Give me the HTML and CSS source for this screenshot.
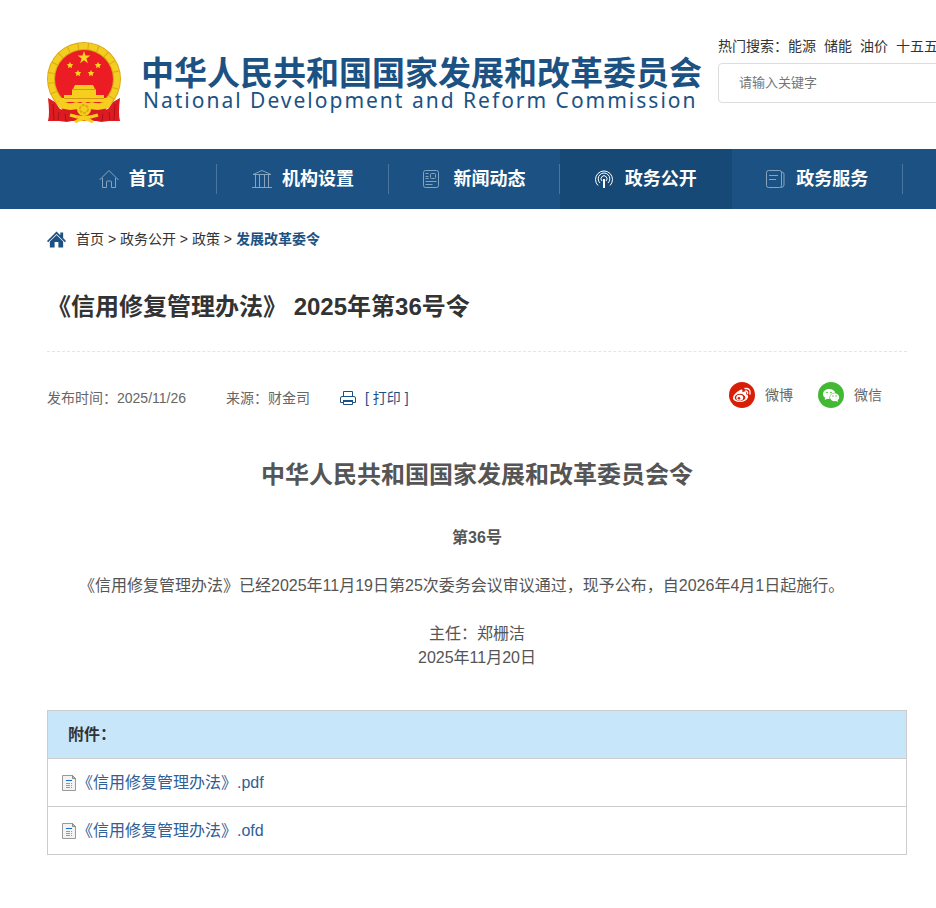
FILE: index.html
```html
<!DOCTYPE html>
<html lang="zh-CN">
<head>
<meta charset="utf-8">
<meta name="viewport" content="width=device-width, initial-scale=1">
<title>《信用修复管理办法》 2025年第36号令</title>
<link rel="stylesheet" href="styles.css">
</head>
<body>
<header class="header">
  <a class="brand" href="#">
    <svg class="emblem" viewBox="0 0 76 82" aria-hidden="true">
      <circle cx="38" cy="37" r="37" fill="#dba915"/>
      <circle cx="38" cy="37" r="33" fill="none" stroke="#f3cd1f" stroke-width="6" stroke-dasharray="9 1"/>
      <circle cx="38" cy="37" r="29" fill="#eb1c24"/>
      <path fill="#fcd71f" d="M38 9l1.500 4.600h4.900l-4 2.900 1.500 4.700-3.900-2.900-3.900 2.900 1.500-4.700-4-2.900h4.900z"/>
      <path fill="#fcd71f" d="M24 20l1 2 2.300.3-1.700 1.600.4 2.300-2-1.100-2 1.100.4-2.300-1.700-1.600 2.300-.3zM52 20l1 2 2.300.3-1.700 1.600.4 2.300-2-1.100-2 1.100.4-2.300-1.700-1.600 2.300-.3zM32 28l1 2 2.300.3-1.700 1.600.4 2.300-2-1.100-2 1.100.4-2.300-1.700-1.600 2.300-.3zM45 28l1 2 2.300.3-1.700 1.600.4 2.300-2-1.100-2 1.100.4-2.300-1.700-1.600 2.300-.3z"/>
      <path fill="#f6cf1e" d="M29 43h18l2 4H27zM26 47h24v6h8v3h5v4H13v-4h5v-3h8z"/>
      <path stroke="#d49b12" d="M26 47.500h24M18 56.500h40"/>
      <path fill="#df1b22" d="M2 56l7 4 5 7 12 3 4 8-9 2-8-1H2q2-7 0-23zM74 56l-7 4-5 7-12 3-4 8 9 2 8-1h11q-2-7 0-23z"/>
      <path fill="#d91b20" d="M14 63q12 3 24 1 12 2 24-1l-8 16H22z"/>
      <path fill="#f6cf1e" d="M10 59q13 4 20 1l8 2 8-2q7 3 20-1l-3 7-11 2-9-1q-5 5-10 0l-9 1-11-2z"/>
      <circle cx="38" cy="67" r="7" fill="#f6cf1e"/>
      <circle cx="38" cy="67" r="4" fill="none" stroke="#e2a713" stroke-width="2" stroke-dasharray="3 1"/>
      <path fill="none" stroke="#a61318" d="M7 62l1 16M13 70l-1 8M19 72l1 7M69 62l-1 16M63 70l1 8M57 72l-1 7"/>
      <path fill="none" stroke="#f6cf1e" stroke-width="3" d="M24 73q14 5 28 0M29 80q9-6 18 0"/>
    </svg>
    <span class="brand-text">
      <strong class="brand-cn">中华人民共和国国家发展和改革委员会</strong>
      <span class="brand-en">National Development and Reform Commission</span>
    </span>
  </a>
  <div class="search">
    <div class="hot"><label for="keyword">热门搜索：</label><a href="#">能源</a><a href="#">储能</a><a href="#">油价</a><a href="#">十五五</a></div>
    <input class="search-box" id="keyword" type="text" placeholder="请输入关键字">
  </div>
</header>

<nav class="nav">
  <a class="nav-item" href="#">
    <svg viewBox="0 0 20 20" aria-hidden="true"><path d="M.5 11L10 1.500 19.500 11M3.500 9v9.500h4V13q0-1 1-1h3q1 0 1 1v5.500h4V9"/></svg>首页</a>
  <a class="nav-item" href="#">
    <svg viewBox="0 0 20 20" aria-hidden="true"><path d="M1 5.500L10 1.500l9 4zM0 18.500h20M3.500 6v12M7.500 6v12M12.500 6v12M16.500 6v12"/></svg>机构设置</a>
  <a class="nav-item" href="#">
    <svg viewBox="0 0 20 20" aria-hidden="true"><rect x=".5" y="1.500" width="15" height="17" rx="2"/><rect x="7.500" y="4.500" width="5" height="5" rx="1"/><path d="M2.500 4.500h3M2.500 7.500h3M2.500 9.500h3M2.500 12.500h11M2.500 15.500h7"/></svg>新闻动态</a>
  <a class="nav-item active" href="#">
    <svg viewBox="0 0 20 20" aria-hidden="true"><path d="M3 16.500a8.500 8.500 0 1 1 12 0M5 14a5.800 5.800 0 1 1 8 0M7 12a3 3 0 1 1 4 0"/><path class="mast" d="M9 10v9"/></svg>政务公开</a>
  <a class="nav-item" href="#">
    <svg viewBox="0 0 20 20" aria-hidden="true"><rect x=".5" y="1.500" width="15" height="17" rx="2"/><path d="M3 6.500h9M3 10.500h7M15 3q3 0 3 2v11q0 2-3 2.500"/></svg>政务服务</a>
</nav>

<main class="page">
  <div class="crumbs">
    <svg viewBox="0 0 20 17" aria-hidden="true"><path d="M10 0l4 4V1h3v6l3 3-1.200 1.300L10 2.700 1.200 11.300 0 10z"/><path d="M3 10.500l7-6.700 7 6.700V17h-5v-6H8v6H3z"/></svg>
    <span><a href="#">首页</a> &gt; <a href="#">政务公开</a> &gt; <a href="#">政策</a> &gt; <a class="current" href="#">发展改革委令</a></span>
  </div>
  <h1 class="title">《信用修复管理办法》 2025年第36号令</h1>
  <div class="meta">
    <span class="info">发布时间：2025/11/26</span>
    <span class="info source">来源：财金司</span>
    <button class="info print" type="button">
      <svg viewBox="0 0 16 14" aria-hidden="true"><path fill="none" stroke="currentColor" d="M3.500 5V.500h9V5M3 11.500H.500V7q0-1.500 1.500-1.500h12q1.500 0 1.500 1.500v4.500H13M3.500 9.500h9v4h-9z"/><path fill="currentColor" d="M3 9h10v2H3z"/></svg>[ 打印 ]</button>
    <div class="share">
      <a href="#"><svg viewBox="0 0 26 26" aria-hidden="true"><circle cx="13" cy="13" r="13" fill="#d81e06"/><path fill="#fff" d="M11 8q2-1 2.500.5l-.2 1.700q4-1.500 4 .8l-.4 1.300q3 .8 2 3.500-1.500 4-8 4.300-6 0-7-3.800-.2-4 7.100-8.300z"/><ellipse cx="11" cy="15.500" rx="5.300" ry="3.700" fill="#d81e06"/><ellipse cx="10.700" cy="15.700" rx="3.500" ry="3" fill="#fff"/><circle cx="10" cy="16.200" r="1.300" fill="#d81e06"/><path fill="none" stroke="#fff" stroke-width="1.400" stroke-linecap="round" d="M16 6.500q6-.5 5 5.500M16.500 9q2.500 0 2 2.500"/></svg>微博</a>
      <a href="#"><svg viewBox="0 0 26 26" aria-hidden="true"><circle cx="13" cy="13" r="13" fill="#43b933"/><path fill="#fff" d="M11 7c-3.400 0-6 2.200-6 5 0 1.600.8 2.900 2.200 3.800L6.700 18l2.400-1.300q1 .3 2.500.2c-.8-3.600 2.200-6.400 5.800-6.200C16.700 8.400 14 7 11 7z"/><path fill="#fff" d="M16.500 11.200c-2.500 0-4.500 1.700-4.500 4s2 4 4.500 4l1.600-.3 2 1-.5-1.700c1-.8 1.600-1.800 1.600-3 0-2.300-2.100-4-4.700-4z"/><g fill="#43b933"><circle cx="9" cy="10.500" r=".8"/><circle cx="13" cy="10.500" r=".8"/><circle cx="15" cy="14" r=".7"/><circle cx="18" cy="14" r=".7"/></g></svg>微信</a>
    </div>
  </div>

  <article class="article">
    <h2>中华人民共和国国家发展和改革委员会令</h2>
    <p class="number">第36号</p>
    <p class="body">《信用修复管理办法》已经2025年11月19日第25次委务会议审议通过，现予公布，自2026年4月1日起施行。</p>
    <p class="sign">主任：郑栅洁<br>2025年11月20日</p>
  </article>

  <table class="files">
    <thead><tr><th scope="col">附件：</th></tr></thead>
    <tbody>
      <tr><td><a href="#"><svg viewBox="0 0 16 16" aria-hidden="true"><path fill="#f3f3f3" stroke="#999" d="M1.500.500h10l3 3v12h-13z"/><path fill="#ccc" stroke="#888" d="M11.500.500v3h3z"/><path stroke="#1769c5" d="M5 5.500h6"/><path stroke="#999" d="M5 8.500h4M5 10.500h4M5 12.500h4M10 8.500h1M10 10.500h1M10 12.500h1"/></svg>《信用修复管理办法》.pdf</a></td></tr>
      <tr><td><a href="#"><svg viewBox="0 0 16 16" aria-hidden="true"><path fill="#f3f3f3" stroke="#999" d="M1.500.500h10l3 3v12h-13z"/><path fill="#ccc" stroke="#888" d="M11.500.500v3h3z"/><path stroke="#1769c5" d="M5 5.500h6"/><path stroke="#999" d="M5 8.500h4M5 10.500h4M5 12.500h4M10 8.500h1M10 10.500h1M10 12.500h1"/></svg>《信用修复管理办法》.ofd</a></td></tr>
    </tbody>
  </table>
</main>
</body>
</html>
```
FILE: styles.css
```css
* { box-sizing: border-box; }

body {
  margin: 0;
  background: #fff;
  color: #333;
  font: 14px/24px "Liberation Sans", "Noto Sans CJK SC", sans-serif;
}

a { color: inherit; text-decoration: none; }
svg { display: block; flex: none; }

.header {
  display: flex;
  gap: 16px;
  padding: 34px 0 25px 46px;
  overflow: hidden;
}

.brand {
  display: flex;
  flex: none;
  gap: 19px;
  padding-top: 8px;
  color: #1c5283;
}
.emblem { width: 76px; height: 82px; }
.brand-text { display: flex; flex-direction: column; padding-top: 14px; }
.brand-cn { font-size: 33px; line-height: 36px; white-space: nowrap; }
.brand-en {
  margin-top: -4px;
  padding-left: 2px;
  font: 21px/24px "Noto Sans", sans-serif;
  letter-spacing: 2px;
  white-space: nowrap;
}

.search { flex: none; width: 300px; }
.hot { display: flex; white-space: nowrap; }
.hot a { margin-right: 8px; }
.search-box {
  display: block;
  width: 100%;
  height: 40px;
  margin-top: 5px;
  padding: 0 20px 2px;
  border: 1px solid #ddd;
  border-radius: 4px;
  font: 13px "Liberation Sans", "Noto Sans CJK SC", sans-serif;
}
.search-box::placeholder { color: #757575; opacity: 1; }

.nav {
  display: grid;
  grid-template-columns: repeat(5, 20%);
  padding: 0 33px 0 46px;
  background: #1c5283;
}
.nav-item {
  position: relative;
  display: flex;
  align-items: center;
  justify-content: center;
  gap: 10px;
  height: 60px;
  color: #fff;
  font-size: 18px;
  font-weight: bold;
}
.nav-item::after {
  content: "";
  position: absolute;
  top: 15px;
  right: 0;
  width: 1px;
  height: 30px;
  background: #4a769d;
}
.nav-item.active { background: #174976; }
.nav-item.active::after { content: none; }
.nav-item svg {
  width: 20px;
  height: 20px;
  fill: none;
  stroke: #86a4be;
}
.nav-item.active svg { stroke: #fff; }
.mast { stroke-width: 2; }

.page { padding: 18px 29px 53px 47px; }

.crumbs { display: flex; align-items: center; gap: 10px; }
.crumbs svg { width: 19px; height: 17px; fill: #1c5283; }
.current { color: #1c5283; font-weight: bold; }

.title {
  margin: 38px 0 0;
  padding-bottom: 26px;
  border-bottom: 1px dashed #e5e5e5;
  font-size: 24px;
  line-height: 36px;
}

.meta {
  display: flex;
  align-items: flex-start;
  padding: 30px 25px 0 0;
  color: #666;
}
.info { padding: 4px 0 0; }
.source { margin-left: 40px; }
.print {
  display: flex;
  align-items: center;
  gap: 9px;
  margin-left: 30px;
  border: 0;
  background: none;
  color: #1c5283;
  font: inherit;
}
.print svg { width: 16px; height: 14px; }
.share { display: flex; gap: 25px; margin-left: auto; }
.share a { display: flex; align-items: center; gap: 10px; }
.share svg { width: 26px; height: 26px; }

.article {
  padding-top: 47px;
  color: #555;
  font-size: 16px;
  text-align: center;
}
.article h2 { margin: 0; font-size: 24px; line-height: 36px; }
.article p { margin: 24px 0 0; }
.article .number { margin-top: 33px; font-weight: bold; }
.article .body { text-align: left; text-indent: 32px; }

.files {
  width: 100%;
  margin-top: 40px;
  border-collapse: collapse;
  font-size: 16px;
  text-align: left;
}
.files th, .files td { height: 48px; border: 1px solid #ccc; }
.files th { padding: 0 20px; background: #c8e6fa; }
.files td { padding: 0 13px; color: #2f6096; }
.files a { display: flex; align-items: center; }
.files svg { width: 16px; height: 16px; }
```
